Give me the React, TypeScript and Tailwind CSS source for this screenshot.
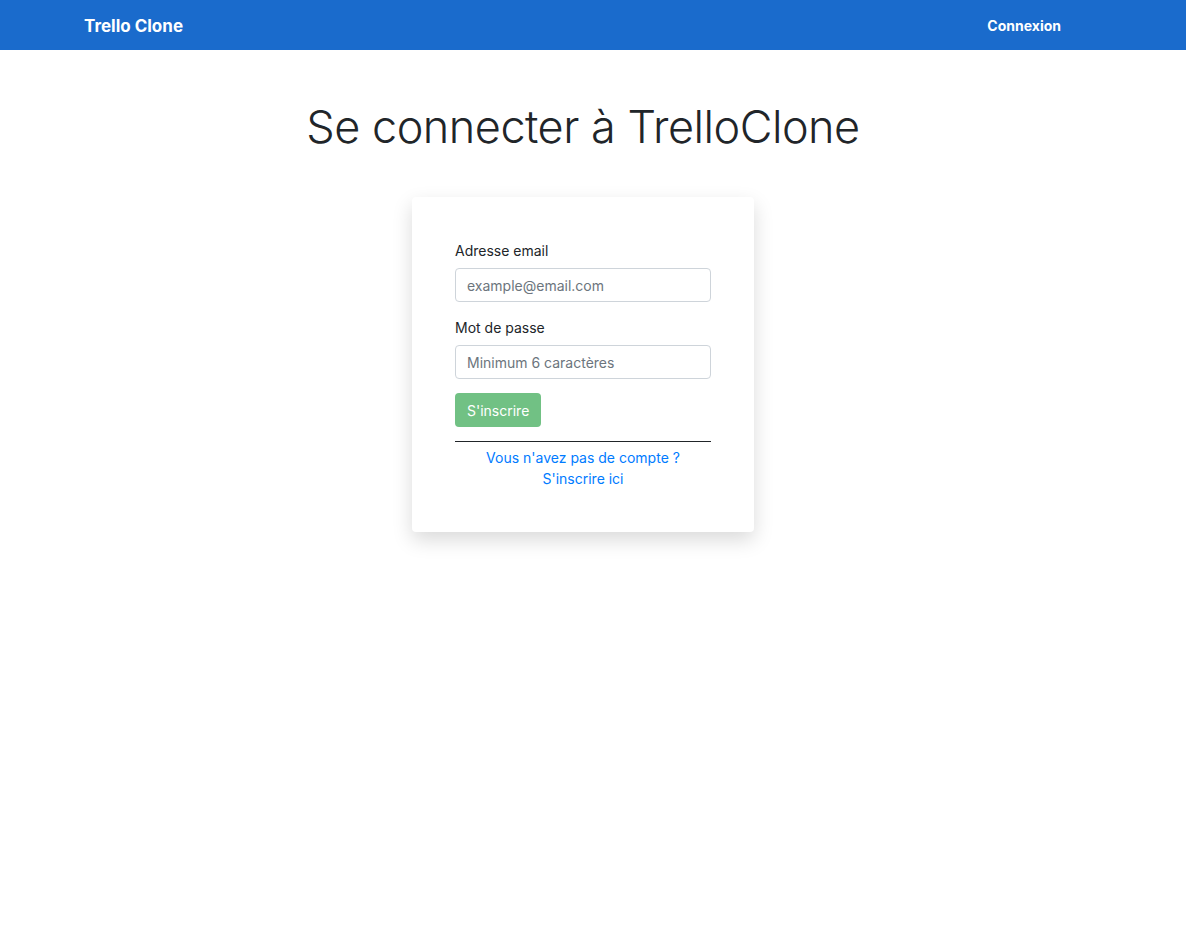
import React from 'react';

const App = () => {
  return (
    <div className="min-h-screen bg-white text-[#212529]" style={{ fontFamily: 'Inter, "Liberation Sans", sans-serif' }}>
      <nav className="bg-[#1a6bcc] h-[50px]">
        <div className="flex items-center justify-between h-full pl-[84px] pr-[125px]">
          <span className="text-white text-[17px] font-bold mt-[3px]">Trello Clone</span>
          <a href="#" className="text-white text-[14px] font-bold">Connexion</a>
        </div>
      </nav>

      <div className="flex flex-col items-center pr-[20px]">
        <h1 className="mt-[50px] text-[45px] font-light leading-[1.2] tracking-[-0.5px] text-[#212529]">
          Se connecter à TrelloClone
        </h1>

        <div className="mt-[43px] w-[342px] bg-white rounded-[4px] shadow-[0_8px_20px_rgba(0,0,0,0.15)] px-[43px] pt-[43px] pb-[43px]">
          <label className="block text-[14px] mb-[7px]">Adresse email</label>
          <input
            type="email"
            placeholder="example@email.com"
            className="block w-full h-[34px] px-[11px] text-[14px] border border-[#ced4da] rounded-[4px] placeholder:text-[#6c757d] outline-none"
          />
          <label className="block text-[14px] mt-[15px] mb-[7px]">Mot de passe</label>
          <input
            type="password"
            placeholder="Minimum 6 caractères"
            className="block w-full h-[34px] px-[11px] text-[14px] border border-[#ced4da] rounded-[4px] placeholder:text-[#6c757d] outline-none"
          />
          <button
            disabled
            className="mt-[14px] h-[34px] px-[12px] bg-[#71c184] text-white text-[14px] rounded-[4px]"
          >
            S'inscrire
          </button>
          <hr className="mt-[14px] border-0 border-t border-[#212529]" />
          <div className="mt-[5px] text-center text-[14px] leading-[21px] text-[#007bff]">
            <div>Vous n'avez pas de compte ?</div>
            <a href="#">S'inscrire ici</a>
          </div>
        </div>
      </div>
    </div>
  );
};

export default App;
